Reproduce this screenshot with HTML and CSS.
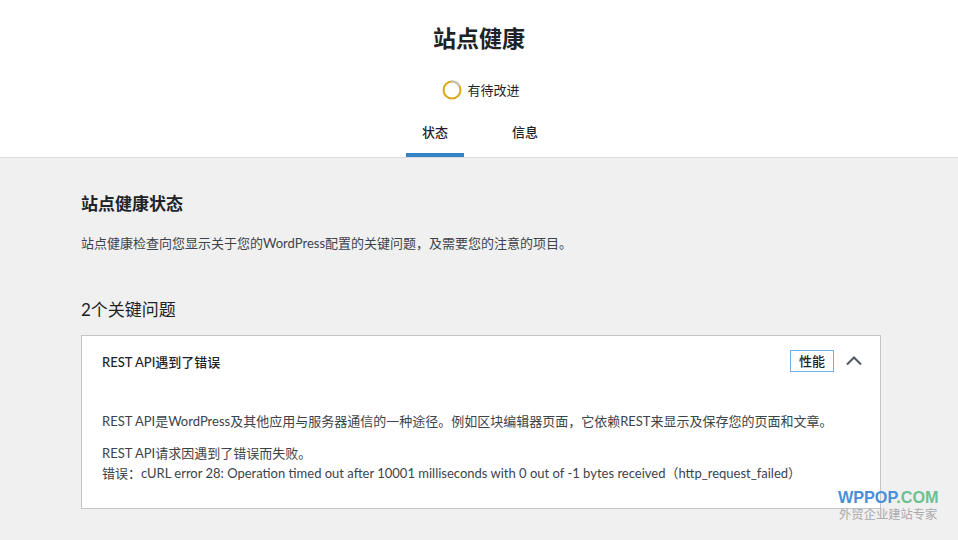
FILE: index.html
```html
<!DOCTYPE html>
<html lang="zh-CN">
<head>
    <meta charset="UTF-8">
    <title>站点健康</title>
    <link rel="stylesheet" href="styles.css">
</head>
<body>
    <div class="health-header">
        <h1 class="health-title">站点健康</h1>
        <div class="health-status">
            <svg class="status-ring" width="20" height="20" viewBox="0 0 20 20">
                <circle cx="10" cy="10" r="8.5" fill="none" stroke="#dba617" stroke-width="2"/>
                <circle cx="10" cy="10" r="8.5" fill="none" stroke="#c3c4c7" stroke-width="2" stroke-dasharray="10 60" transform="rotate(-95 10 10)"/>
            </svg>
            <span>有待改进</span>
        </div>
        <nav class="health-tabs">
            <a class="tab active">状态</a>
            <a class="tab">信息</a>
        </nav>
    </div>

    <div class="health-body">
        <h2 class="section-title">站点健康状态</h2>
        <p class="section-desc">站点健康检查向您显示关于您的WordPress配置的关键问题，及需要您的注意的项目。</p>

        <h3 class="issues-count">2个关键问题</h3>
        <div class="issue">
            <div class="issue-head">
                <span class="issue-title">REST API遇到了错误</span>
                <span class="badge">性能</span>
                <svg class="chevron" width="16" height="10" viewBox="0 0 16 10">
                    <path d="M1 8.5 L8 1.5 L15 8.5" fill="none" stroke="#50575e" stroke-width="2"/>
                </svg>
            </div>
            <div class="issue-body">
                <p>REST API是WordPress及其他应用与服务器通信的一种途径。例如区块编辑器页面，它依赖REST来显示及保存您的页面和文章。</p>
                <p>REST API请求因遇到了错误而失败。<br>错误：cURL error 28: Operation timed out after 10001 milliseconds with 0 out of -1 bytes received（http_request_failed）</p>
            </div>
        </div>
    </div>

    <div class="watermark">
        <div class="wm-logo"><span class="wm-blue">WPPOP</span><span class="wm-green">.COM</span></div>
        <div class="wm-sub">外贸企业建站专家</div>
    </div>
</body>
</html>
```

FILE: styles.css
```css
html, body{
    margin:0;
    padding:0;
}
body{
    background:#f0f0f1;
    font-family:Lato, "Noto Sans CJK SC", sans-serif;
    font-size:13px;
    color:#3c434a;
    height:540px;
    overflow:hidden;
    position:relative;
}
.health-header{
    background:#fff;
    border-bottom:1px solid #dcdcde;
    text-align:center;
}
.health-title{
    margin:0;
    padding-top:23px;
    font-size:23px;
    line-height:30px;
    font-weight:700;
    color:#1d2327;
}
.health-status{
    margin-top:27px;
    height:20px;
    display:flex;
    justify-content:center;
    align-items:center;
    gap:5px;
    padding-left:4px;
    line-height:20px;
    color:#1d2327;
}
.health-tabs{
    display:flex;
    justify-content:center;
    gap:32px;
    padding-left:2px;
}
.tab{
    width:58px;
    padding:22px 0 11px;
    line-height:20px;
    border-bottom:4px solid transparent;
    color:#1d2327;
    font-weight:500;
}
.tab.active{
    border-bottom-color:#3582c4;
}
.health-body{
    width:800px;
    margin-left:81px;
    padding-top:34px;
}
.section-title{
    margin:0;
    font-size:17px;
    line-height:24px;
    font-weight:700;
    color:#1d2327;
}
.section-desc{
    margin:17px 0 0;
    line-height:20px;
}
.issues-count{
    margin:44px 0 0;
    font-size:17px;
    line-height:26px;
    font-weight:400;
    color:#1d2327;
}
.issue{
    margin-top:12px;
    background:#fff;
    border:1px solid #c3c4c7;
}
.issue-head{
    height:50px;
    display:flex;
    align-items:center;
    padding:0 18px 0 20px;
}
.issue-title{
    flex:1;
    font-weight:500;
    color:#1d2327;
}
.badge{
    border:1px solid #72aee6;
    padding:0 8px;
    line-height:20px;
    color:#1d2327;
    font-weight:500;
    margin-right:12px;
}
.issue-body{
    padding:25px 20px 25px;
}
.issue-body p{
    margin:0;
    line-height:20px;
}
.issue-body p + p{
    margin-top:12px;
}
.watermark{
    position:absolute;
    left:838px;
    top:487px;
    text-align:center;
}
.wm-logo{
    font-family:"Liberation Sans", Arial, sans-serif;
    font-weight:700;
    font-size:16.2px;
    line-height:20px;
}
.wm-blue{color:#4a90d9;}
.wm-green{color:#6cc08e;}
.wm-sub{
    font-size:12.3px;
    line-height:16px;
    color:#aaa;
}
```
